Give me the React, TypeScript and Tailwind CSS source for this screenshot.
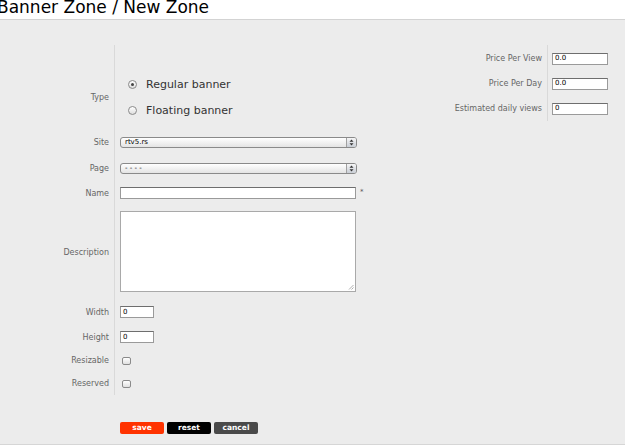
import React from "react";

function Row({ label, h, children }: { label?: string; h: string; children?: React.ReactNode }) {
  return (
    <div className={`flex ${h}`}>
      <div className="flex w-[115px] shrink-0 items-center justify-end border-r border-[#d9d9d9] pr-[5px] pt-[2px] text-[8px] leading-none text-[#666]">
        {label}
      </div>
      <div className="flex flex-1 items-center pl-[5px]">{children}</div>
    </div>
  );
}

function RRow({ label, h, children }: { label?: string; h: string; children?: React.ReactNode }) {
  return (
    <div className={`flex ${h}`}>
      <div className="flex w-[118px] shrink-0 items-center justify-end border-r border-[#d9d9d9] pr-[5px] pt-[1px] text-[8px] leading-none text-[#666]">
        {label}
      </div>
      <div className="flex flex-1 items-center pl-[4px]">{children}</div>
    </div>
  );
}

function TextInput({ value, w }: { value?: string; w: string }) {
  return (
    <div
      className={`flex h-[12px] items-center border border-[#9a9a9a] border-t-[#6e6e6e] bg-white pl-[2px] text-[7px] leading-none text-black ${w}`}
    >
      {value}
    </div>
  );
}

function Select({ value }: { value: string }) {
  return (
    <div className="flex h-[11px] w-[237px] items-center overflow-hidden rounded-[3px] border border-[#8a8a8a] bg-linear-to-b from-white to-[#e4e4e4] pl-[4px] text-[7px] leading-none text-black">
      <span>{value}</span>
      <div className="ml-auto flex h-full w-[10px] items-center justify-center border-l border-[#a0a0a0] bg-linear-to-b from-[#f6f6f6] to-[#c9ced6]">
        <svg width="5" height="7" viewBox="0 0 5 7">
          <path d="M2.5 0.5 L4.5 2.8 L0.5 2.8 Z" fill="#333" />
          <path d="M2.5 6.5 L4.5 4.2 L0.5 4.2 Z" fill="#333" />
        </svg>
      </div>
    </div>
  );
}

function Radio({ checked, label }: { checked?: boolean; label: string }) {
  return (
    <div className="flex h-[26px] items-center">
      <div className="ml-[8px] flex h-[9px] w-[9px] items-center justify-center rounded-full border border-[#8a8a8a] bg-linear-to-b from-white to-[#dedede]">
        {checked && <div className="h-[3px] w-[3px] rounded-full bg-[#444]" />}
      </div>
      <span className="ml-[9px] text-[11px] leading-none text-[#333]">{label}</span>
    </div>
  );
}

function Checkbox() {
  return (
    <div className="ml-[2px] mt-[1px] h-[8px] w-[9px] rounded-[2px] border border-[#8a8a8a] bg-linear-to-b from-white to-[#e0e0e0]" />
  );
}

export default function App() {
  return (
    <div className="h-[447px] w-[625px] overflow-hidden bg-white font-['DejaVu_Sans',sans-serif]">
      <div className="h-[20px] overflow-hidden border-b border-[#d3d3d3] bg-white">
        <div className="ml-[-3px] mt-[-1px] text-[17px] leading-[17px] text-black">Banner Zone / New Zone</div>
      </div>
      <div className="flex h-[425px] border-b border-[#d6d6d6] bg-[#ececec] pt-[25px]">
        <div className="flex w-[400px] flex-col">
          <Row h="h-[26px]" />
          <Row label="Type" h="h-[52px]">
            <div className="flex flex-col">
              <Radio checked label="Regular banner" />
              <Radio label="Floating banner" />
            </div>
          </Row>
          <Row h="h-[9px]" />
          <Row label="Site" h="h-[20px]">
            <Select value="rtv5.rs" />
          </Row>
          <Row h="h-[6px]" />
          <Row label="Page" h="h-[20px]">
            <Select value="- - - -" />
          </Row>
          <Row h="h-[5px]" />
          <Row label="Name" h="h-[20px]">
            <TextInput w="w-[236px]" />
            <span className="ml-[4px] mt-[-2px] text-[7px] leading-none text-[#555]">*</span>
          </Row>
          <Row h="h-[8px]" />
          <Row label="Description" h="h-[81px]">
            <div className="relative h-[81px] w-[236px] border border-[#a9a9a9] bg-white">
              <svg className="absolute bottom-[1px] right-[1px]" width="6" height="6" viewBox="0 0 6 6">
                <path d="M5.5 1 L1 5.5 M5.5 3.5 L3.5 5.5" stroke="#999" strokeWidth="0.8" />
              </svg>
            </div>
          </Row>
          <Row h="h-[10px]" />
          <Row label="Width" h="h-[20px]">
            <TextInput value="0" w="w-[34px]" />
          </Row>
          <Row h="h-[5px]" />
          <Row label="Height" h="h-[20px]">
            <TextInput value="0" w="w-[34px]" />
          </Row>
          <Row h="h-[3px]" />
          <Row label="Resizable" h="h-[20px]">
            <Checkbox />
          </Row>
          <Row h="h-[3px]" />
          <Row label="Reserved" h="h-[20px]">
            <Checkbox />
          </Row>
          <Row h="h-[2px]" />
          <div className="ml-[120px] mt-[27px] flex gap-[3px]">
            <div className="flex h-[12px] w-[44px] items-center justify-center rounded-[2px] bg-[#ff3300] text-[7.5px] font-bold leading-none text-white">
              save
            </div>
            <div className="flex h-[12px] w-[44px] items-center justify-center rounded-[2px] bg-black text-[7.5px] font-bold leading-none text-white">
              reset
            </div>
            <div className="flex h-[12px] w-[44px] items-center justify-center rounded-[2px] bg-[#4a4a4a] text-[7.5px] font-bold leading-none text-white">
              cancel
            </div>
          </div>
        </div>
        <div className="ml-auto mr-[17px] flex flex-col self-start">
          <RRow h="h-[1px]" />
          <RRow label="Price Per View" h="h-[25px]">
            <TextInput value="0.0" w="w-[56px]" />
          </RRow>
          <RRow label="Price Per Day" h="h-[25px]">
            <TextInput value="0.0" w="w-[56px]" />
          </RRow>
          <RRow label="Estimated daily views" h="h-[25px]">
            <TextInput value="0" w="w-[56px]" />
          </RRow>
        </div>
      </div>
    </div>
  );
}
